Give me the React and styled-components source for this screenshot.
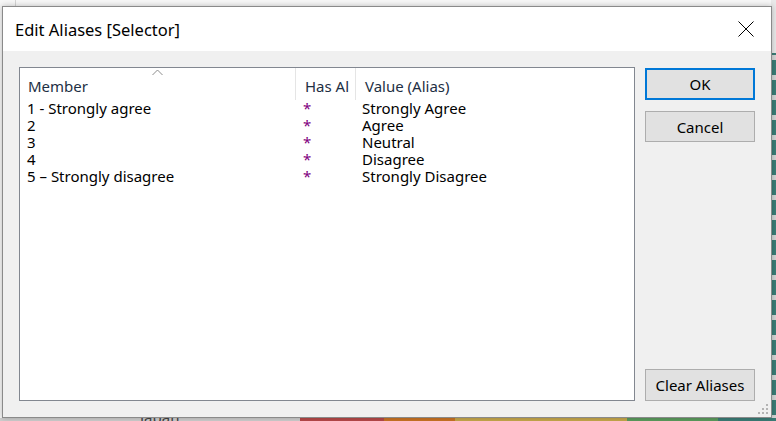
import React from "react";
import styled, { createGlobalStyle } from "styled-components";

const Global = createGlobalStyle`
  html, body {
    margin: 0;
    padding: 0;
    background: #f4f4f4;
  }
  * { box-sizing: border-box; }
`;

const Screen = styled.div`
  position: relative;
  width: 776px;
  height: 421px;
  overflow: hidden;
  font-family: "Noto Sans", "Open Sans", sans-serif;
  display: grid;
  grid-template-columns: 1fr 5px;
  grid-template-rows: 1fr 3px;
  background: #f6f6f6;
`;

const Workspace = styled.div`
  background:
    linear-gradient(to right, transparent 15px, #d4d4d4 15px, #d4d4d4 16px, transparent 16px),
    #f7f7f7;
  position: relative;
`;

const BehindLabel = styled.span`
  position: absolute;
  left: 140px;
  bottom: -9px;
  font-size: 15px;
  color: #444;
`;

const TealStrip = styled.div`
  background:
    linear-gradient(to bottom, #e9e9e9 0px, #e9e9e9 53px, transparent 53px),
    repeating-linear-gradient(
      to bottom,
      #3b7d77 0px,
      #3b7d77 15px,
      #d6d6d6 15px,
      #d6d6d6 20px
    );
`;

const ColorBar = styled.div`
  display: flex;
  grid-column: 1 / span 2;
`;

const Segment = styled.div`
  width: ${(p) => p.$w}px;
  flex: ${(p) => (p.$grow ? 1 : "none")};
  background: ${(p) => p.$c};
`;

const Dialog = styled.div`
  position: absolute;
  left: 2px;
  top: 6px;
  width: 770px;
  height: 412px;
  border: 1px solid #8a8a8a;
  background: #f0f0f0;
  box-shadow: 0 0 6px rgba(0, 0, 0, 0.25);
  display: flex;
  flex-direction: column;
`;

const TitleBar = styled.div`
  height: 44px;
  background: #ffffff;
  display: flex;
  align-items: center;
  justify-content: space-between;
  padding: 0 17px 0 12px;
  flex: none;
`;

const Title = styled.span`
  font-size: 16.5px;
  color: #000;
`;

const CloseIcon = styled.svg`
  width: 16px;
  height: 16px;
  display: block;
`;

const Body = styled.div`
  flex: 1;
  display: flex;
  gap: 10px;
  padding: 16px;
  position: relative;
`;

const List = styled.div`
  flex: 1;
  border: 1px solid #828790;
  background: #fff;
  display: flex;
  flex-direction: column;
`;

const Columns = "276px 60px 1fr";

const HeaderRow = styled.div`
  display: grid;
  grid-template-columns: ${Columns};
  height: 32px;
  flex: none;
`;

const HeaderCell = styled.div`
  position: relative;
  display: flex;
  align-items: center;
  padding-left: ${(p) => p.$pad}px;
  padding-top: 3px;
  font-size: 15px;
  color: #1e2f44;
  white-space: nowrap;
  overflow: hidden;
  border-right: ${(p) => (p.$sep ? "1px solid #e5e5e5" : "none")};
`;

const SortArrow = styled.svg`
  position: absolute;
  left: 132px;
  top: 1px;
  width: 11px;
  height: 7px;
`;

const Row = styled.div`
  display: grid;
  grid-template-columns: ${Columns};
  height: 17px;
  line-height: 17px;
  font-size: 15px;
  color: #000;
`;

const Cell = styled.div`
  padding-left: ${(p) => p.$pad}px;
  white-space: nowrap;
  color: ${(p) => p.$c || "#000"};
`;

const Buttons = styled.div`
  width: 110px;
  display: flex;
  flex-direction: column;
  gap: 11px;
  padding-top: 1px;
`;

const Button = styled.button`
  height: ${(p) => p.$h || 31}px;
  width: 110px;
  font-family: inherit;
  font-size: 15px;
  color: #000;
  background: #e1e1e1;
  border: ${(p) => (p.$primary ? "2px solid #0078d7" : "1px solid #adadad")};
  padding: 0;
  margin-top: ${(p) => (p.$bottom ? "auto" : 0)};
`;

const Grip = styled.svg`
  position: absolute;
  right: 3px;
  bottom: 3px;
  width: 10px;
  height: 10px;
`;

const rows = [
  ["1 - Strongly agree", "Strongly Agree"],
  ["2", "Agree"],
  ["3", "Neutral"],
  ["4", "Disagree"],
  ["5 \u2013 Strongly disagree", "Strongly Disagree"],
];

export default function App() {
  return (
    <>
      <Global />
      <Screen>
        <Workspace>
          <BehindLabel>Japan</BehindLabel>
        </Workspace>
        <TealStrip />
        <ColorBar>
          <Segment $w={300} $c="#cfcfcf" />
          <Segment $w={84} $c="#b8494a" />
          <Segment $w={71} $c="#cb7424" />
          <Segment $w={172} $c="#c8a94c" />
          <Segment $w={91} $c="#5c9d5e" />
          <Segment $grow $c="#3b7d77" />
        </ColorBar>

        <Dialog>
          <TitleBar>
            <Title>Edit Aliases [Selector]</Title>
            <CloseIcon viewBox="0 0 16 16">
              <path d="M0.5 0.5 L15.5 15.5 M15.5 0.5 L0.5 15.5" stroke="#000" strokeWidth="1" fill="none" />
            </CloseIcon>
          </TitleBar>
          <Body>
            <List>
              <HeaderRow>
                <HeaderCell $pad={8} $sep>
                  Member
                  <SortArrow viewBox="0 0 11 7">
                    <path d="M0.5 6 L5.5 1 L10.5 6" stroke="#8c8c8c" strokeWidth="1" fill="none" />
                  </SortArrow>
                </HeaderCell>
                <HeaderCell $pad={9} $sep>Has Al</HeaderCell>
                <HeaderCell $pad={9}>Value (Alias)</HeaderCell>
              </HeaderRow>
              {rows.map(([member, alias]) => (
                <Row key={member}>
                  <Cell $pad={7}>{member}</Cell>
                  <Cell $pad={7} $c="#800080">*</Cell>
                  <Cell $pad={6}>{alias}</Cell>
                </Row>
              ))}
            </List>
            <Buttons>
              <Button $primary $h={32}>OK</Button>
              <Button>Cancel</Button>
              <Button $bottom $h={32}>Clear Aliases</Button>
            </Buttons>
            <Grip viewBox="0 0 10 10">
              <g fill="#b4b4b4">
                <rect x="8" y="0" width="2" height="2" />
                <rect x="4" y="4" width="2" height="2" />
                <rect x="8" y="4" width="2" height="2" />
                <rect x="0" y="8" width="2" height="2" />
                <rect x="4" y="8" width="2" height="2" />
                <rect x="8" y="8" width="2" height="2" />
              </g>
            </Grip>
          </Body>
        </Dialog>
      </Screen>
    </>
  );
}
